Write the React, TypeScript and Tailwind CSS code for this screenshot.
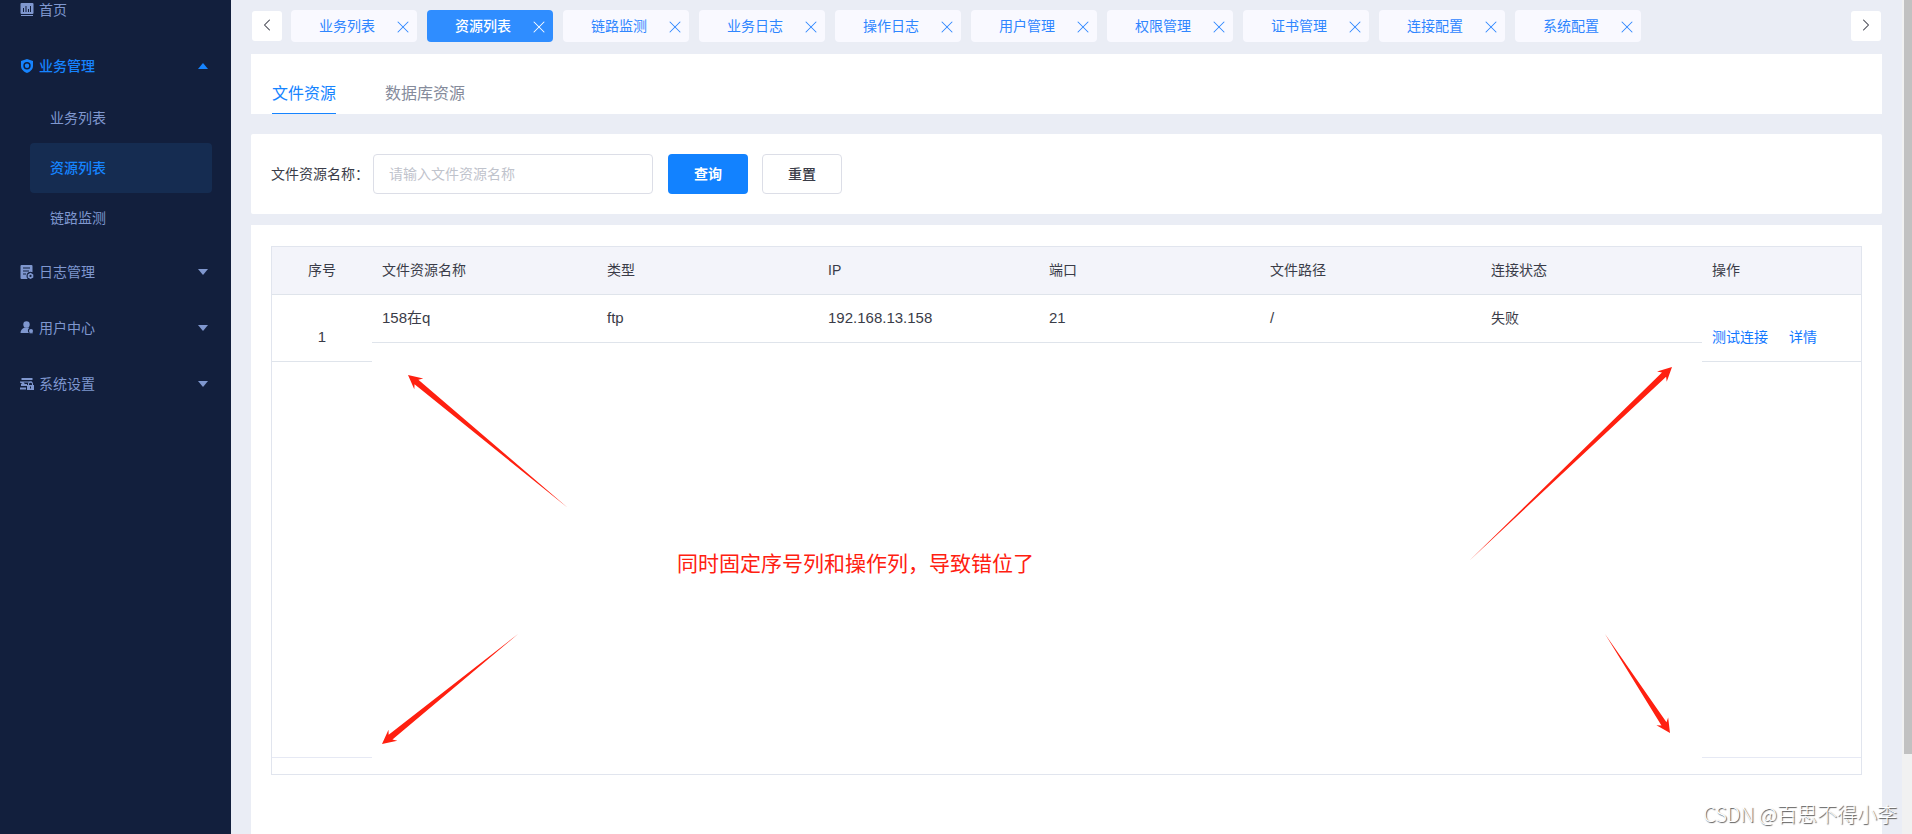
import { useState } from "react";
import { ChevronLeft, ChevronRight, X } from "lucide-react";

type Point = [number, number];

const openTabs = [
  "业务列表",
  "资源列表",
  "链路监测",
  "业务日志",
  "操作日志",
  "用户管理",
  "权限管理",
  "证书管理",
  "连接配置",
  "系统配置",
];

const columns = ["文件资源名称", "类型", "IP", "端口", "文件路径", "连接状态"];
const rows = [
  { name: "158在q", type: "ftp", ip: "192.168.13.158", port: "21", path: "/", status: "失败" },
];

const arrows: { tip: Point; tail: Point }[] = [
  { tip: [408, 375], tail: [568, 508] },
  { tip: [1672, 367], tail: [1469, 561] },
  { tip: [382, 744], tail: [518, 634] },
  { tip: [1670, 733], tail: [1605, 634] },
];

// Tapered arrow: a thin tail that widens up to a barbed head
function arrowPoints([tx, ty]: Point, [sx, sy]: Point) {
  const len = Math.hypot(sx - tx, sy - ty);
  const ux = (sx - tx) / len;
  const uy = (sy - ty) / len;
  const at = (along: number, side: number) =>
    `${tx + ux * along - uy * side},${ty + uy * along + ux * side}`;
  return [at(0, 0), at(14, 7), at(11, 3), at(len, 0), at(11, -3), at(14, -7)].join(" ");
}

function ChartIcon() {
  return (
    <svg width="14" height="14" viewBox="0 0 14 14" fill="currentColor">
      <path
        fillRule="evenodd"
        d="M1.5 0h11A1 1 0 0 1 13.500 1v9a1 1 0 0 1-1 1h-11a1 1 0 0 1-1-1V1a1 1 0 0 1 1-1ZM3 5v4h1V5H3Zm2.500-2v6h1V3h-1ZM8 6v3h1V6H8Zm2-3v6h1V3h-1Z"
      />
      <path d="M1 12h12v1H1z" />
    </svg>
  );
}

function ShieldIcon() {
  return (
    <svg width="14" height="14" viewBox="0 0 14 14" fill="currentColor">
      <path
        fillRule="evenodd"
        d="M7 0 13 2v5c0 3.500-3 5.800-6 7-3-1.200-6-3.500-6-7V2l6-2Zm0 3a3.700 3.700 0 1 0 0 7.400A3.700 3.700 0 0 0 7 3Zm0 1.500a2.200 2.200 0 1 1 0 4.400 2.200 2.200 0 0 1 0-4.400Z"
      />
    </svg>
  );
}

function LogIcon() {
  return (
    <svg width="14" height="14" viewBox="0 0 14 14" fill="currentColor">
      <path
        fillRule="evenodd"
        d="M1.500 0h10a1 1 0 0 1 1 1v6.300A4 4 0 0 0 6.500 11c0 1.200.4 2.200 1.200 3H1.500a1 1 0 0 1-1-1V1a1 1 0 0 1 1-1ZM3 2.500v1h7v-1H3Zm0 3v1h6v-1H3Zm0 3v1h3v-1H3Z"
      />
      <path fillRule="evenodd" d="m10.500 7.800 2.800 1.600v3L10.500 14l-2.800-1.600v-3l2.800-1.600Zm0 2a1.100 1.100 0 1 0 0 2.200 1.100 1.100 0 0 0 0-2.200Z" />
    </svg>
  );
}

function UserIcon() {
  return (
    <svg width="14" height="14" viewBox="0 0 14 14" fill="currentColor">
      <circle cx="6.500" cy="3.500" r="3.200" />
      <path d="M4.500 6.500h4l.8.600A3 3 0 0 0 9 12H.500C.500 9.500 2 7.500 4.500 6.500Z" />
      <circle cx="11" cy="10" r="2" />
      <path d="M9.500 11.500h3.300v.8H9.500z" />
    </svg>
  );
}

function SettingIcon() {
  return (
    <svg width="14" height="14" viewBox="0 0 14 14" fill="currentColor">
      <path d="M1.500 1h11v2h-11zM0 4.500h12v1H3.500L5 7h2v2H1V7h1.500L0 5.500zM0 10.500h6v2H0z" />
      <path fillRule="evenodd" d="M8 8V7a2.500 2.500 0 0 1 5 0v1h1v5H7V8h1Zm1 0h3V7a1.500 1.500 0 0 0-3 0v1Zm1 1.500v2h1v-2h-1Z" />
    </svg>
  );
}

const groups = [
  { label: "日志管理", icon: <LogIcon /> },
  { label: "用户中心", icon: <UserIcon /> },
  { label: "系统设置", icon: <SettingIcon /> },
];

function Caret({ up = false }: { up?: boolean }) {
  return (
    <svg className="ml-auto" width="10" height="6" viewBox="0 0 10 6" fill="currentColor">
      <path d={up ? "M0 6 5 0l5 6z" : "M0 0h10L5 6z"} />
    </svg>
  );
}

function Sidebar() {
  return (
    <aside className="w-[231px] shrink-0 overflow-hidden bg-[#121f3d] text-[#7f97cf]">
      <nav className="-mt-[18px]">
        <a href="#home" className="flex h-14 items-center gap-[5px] pl-5">
          <ChartIcon />
          首页
        </a>
        <button className="flex h-[55px] w-full items-center gap-[5px] pl-5 pr-[23px] font-medium text-[#1684ff]">
          <ShieldIcon />
          业务管理
          <Caret up />
        </button>
        <ul className="pb-px pl-[30px] pr-[19px]">
          <li>
            <a href="#business" className="flex h-[50px] items-center pl-5">业务列表</a>
          </li>
          <li>
            <a href="#resource" className="flex h-[50px] items-center rounded bg-[#152c51] pl-5 font-medium text-[#1684ff]">
              资源列表
            </a>
          </li>
          <li>
            <a href="#link" className="flex h-[50px] items-center pl-5">链路监测</a>
          </li>
        </ul>
        {groups.map((g) => (
          <button key={g.label} className="flex h-14 w-full items-center gap-[5px] pl-5 pr-[23px]">
            {g.icon}
            {g.label}
            <Caret />
          </button>
        ))}
      </nav>
    </aside>
  );
}

function ResourceTable() {
  const head = "h-12 border-b border-[#dfe4eb] bg-[#f3f4fa] pb-0.5 font-normal";
  const cell = "h-12 border-b border-[#dfe4eb] px-[10px] pb-0.5";
  return (
    <div className="flex h-[529px] border border-[#e1e5ee]">
      {/* Fixed left column */}
      <div className="mb-4 w-[100px] shrink-0 border-b border-[#e6e9f4]">
        <table className="w-full border-separate border-spacing-0 text-center">
          <thead>
            <tr>
              <th className={head}>序号</th>
            </tr>
          </thead>
          <tbody>
            <tr>
              <td className="h-[67px] border-b border-[#dfe4eb] pt-[17px] text-[15px]">1</td>
            </tr>
          </tbody>
        </table>
      </div>

      {/* Scrolling columns */}
      <div className="min-w-0 flex-1">
        <table className="w-full table-fixed border-separate border-spacing-0 text-left">
          <thead>
            <tr>
              {columns.map((c, i) => (
                <th key={c} className={`${head} px-[10px] ${i === 0 ? "w-[225px]" : ""}`}>
                  {c}
                </th>
              ))}
            </tr>
          </thead>
          <tbody>
            {rows.map((row) => (
              <tr key={row.name} className="text-[15px]">
                <td className={cell}>{row.name}</td>
                <td className={cell}>{row.type}</td>
                <td className={cell}>{row.ip}</td>
                <td className={cell}>{row.port}</td>
                <td className={cell}>{row.path}</td>
                <td className={`${cell} text-sm`}>{row.status}</td>
              </tr>
            ))}
          </tbody>
        </table>
      </div>

      {/* Fixed right column */}
      <div className="mb-4 w-[159px] shrink-0 border-b border-[#e6e9f4]">
        <table className="w-full border-separate border-spacing-0 text-left">
          <thead>
            <tr>
              <th className={`${head} px-[10px]`}>操作</th>
            </tr>
          </thead>
          <tbody>
            <tr>
              <td className="h-[67px] border-b border-[#dfe4eb] px-[10px] pt-[17px] text-[#1278ff]">
                <div className="flex gap-[21px]">
                  <button>测试连接</button>
                  <button>详情</button>
                </div>
              </td>
            </tr>
          </tbody>
        </table>
      </div>
    </div>
  );
}

export default function App() {
  const [active, setActive] = useState("资源列表");
  const [name, setName] = useState("");

  return (
    <div className="relative flex h-screen overflow-hidden bg-[#eaedf5] font-['Liberation_Sans','Noto_Sans_CJK_SC',sans-serif] text-sm leading-5 text-[#3a3c48]">
      <Sidebar />

      <main className="flex min-w-0 flex-1 flex-col px-5 pt-[10px]">
        {/* Open pages */}
        <div className="flex items-center px-px">
          <button aria-label="向左" className="flex size-[30px] items-center justify-center rounded-[3px] bg-white pb-0.5">
            <ChevronLeft size={20} strokeWidth={1.25} />
          </button>
          <div className="ml-[9px] flex min-w-0 flex-1 gap-[10px] overflow-hidden">
            {openTabs.map((tab) => (
              <div
                key={tab}
                className={`flex h-8 w-[126px] shrink-0 items-center rounded pl-7 pr-1 ${
                  tab === active ? "bg-[#2f8dff] font-medium text-white" : "bg-[#f9f9ff] text-[#2f86ff]"
                }`}
              >
                <button onClick={() => setActive(tab)}>{tab}</button>
                <button aria-label={`关闭${tab}`} className="ml-auto pt-0.5">
                  <X size={20} strokeWidth={1.25} />
                </button>
              </div>
            ))}
          </div>
          <button aria-label="向右" className="flex size-[30px] items-center justify-center rounded-[3px] bg-white pb-0.5">
            <ChevronRight size={20} strokeWidth={1.25} />
          </button>
        </div>

        {/* Resource type */}
        <div className="mt-3 flex h-[60px] items-end gap-[49px] bg-white pl-[21px] text-base">
          <button className="h-10 border-b border-[#1684ff] text-[#1684ff]">文件资源</button>
          <button className="h-10 border-b border-transparent text-[#858b9b]">数据库资源</button>
        </div>

        {/* Search */}
        <form className="mt-5 flex items-center rounded-[2px] bg-white p-5" onSubmit={(e) => e.preventDefault()}>
          <label htmlFor="name" className="w-[102px] whitespace-nowrap">文件资源名称：</label>
          <input
            id="name"
            value={name}
            onChange={(e) => setName(e.target.value)}
            placeholder="请输入文件资源名称"
            className="h-10 w-[280px] rounded border border-[#dcdee7] px-[15px] outline-none placeholder:text-[#bfc3cc]"
          />
          <button type="submit" className="ml-[15px] h-10 w-20 rounded bg-[#1282ff] font-bold text-white">
            查询
          </button>
          <button
            type="button"
            onClick={() => setName("")}
            className="ml-[14px] h-10 w-20 rounded border border-[#dcdee7] font-medium"
          >
            重置
          </button>
        </form>

        <section className="mt-[11px] flex-1 bg-white px-5 pt-[21px]">
          <ResourceTable />
        </section>
      </main>

      {/* Page scrollbar */}
      <div className="flex w-[10px] shrink-0 justify-end bg-[#f1f1f1]">
        <div className="h-[754px] w-2 bg-[#c1c1c1]" />
      </div>

      {/* Annotations */}
      <svg className="pointer-events-none absolute left-0 top-0" width="1912" height="834" fill="#ff2010">
        {arrows.map((a) => (
          <polygon key={a.tip.join()} points={arrowPoints(a.tip, a.tail)} />
        ))}
      </svg>
      <p className="absolute left-[677px] top-[547px] font-['Noto_Sans_CJK_SC',sans-serif] text-[21px] leading-[30px] text-[#ff2010]">
        同时固定序号列和操作列，导致错位了
      </p>
      <p className="absolute bottom-[5px] right-[15px] font-['Noto_Sans_CJK_SC',sans-serif] text-xl leading-[30px] font-light text-white [text-shadow:1px_1px_1px_#555]">
        CSDN @百思不得小李
      </p>
    </div>
  );
}
